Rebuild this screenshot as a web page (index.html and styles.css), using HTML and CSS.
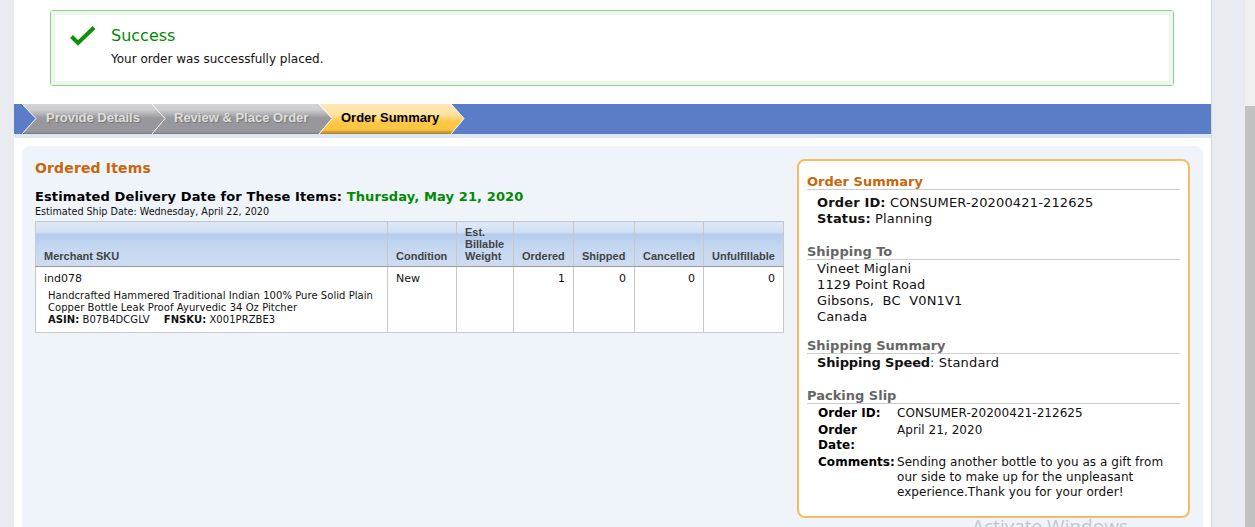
FILE: index.html
```html
<!DOCTYPE html>
<html lang="en">
<head>
  <meta charset="UTF-8">
  <title>Order Summary</title>
  <link rel="stylesheet" href="styles.css">
</head>
<body>
  <div class="gutter-left"></div>

  <div class="page">
    <div class="alert">
      <div class="alert-inner">
        <svg class="alert-icon" width="26" height="21" viewBox="0 0 26 21">
          <path d="M1.500 10.500l6.500 6.500L24 1.500" fill="none" stroke="#0a900a" stroke-width="4"/>
        </svg>
        <div>
          <div class="alert-title">Success</div>
          <div class="alert-text">Your order was successfully placed.</div>
        </div>
      </div>
    </div>

    <div class="steps">
      <svg class="step-defs" width="0" height="0">
        <defs>
          <linearGradient id="greyFill" x1="0" y1="0" x2="0" y2="1">
            <stop offset="0" stop-color="#d6d6d8"/>
            <stop offset=".2" stop-color="#cccccf"/>
            <stop offset=".47" stop-color="#98989c"/>
            <stop offset=".93" stop-color="#98989c"/>
            <stop offset="1" stop-color="#77777a"/>
          </linearGradient>
          <linearGradient id="goldFill" x1="0" y1="0" x2="0" y2="1">
            <stop offset="0" stop-color="#ffe9b8"/>
            <stop offset=".35" stop-color="#ffe2a0"/>
            <stop offset=".6" stop-color="#ffc745"/>
            <stop offset=".85" stop-color="#fcc440"/>
            <stop offset="1" stop-color="#a9812f"/>
          </linearGradient>
        </defs>
      </svg>

      <div class="step step-one">
        <svg width="144" height="30" viewBox="0 0 144 30">
          <path d="M0 0H130L143 14.500L130 30H0L14 14.500Z" fill="url(#greyFill)"/>
          <path d="M130 0L143 14.500L130 30M0 0L14 14.500L0 30" fill="none" stroke="#fff"/>
        </svg>
        <span class="step-label">Provide Details</span>
      </div>
      <div class="step step-two">
        <svg width="181" height="30" viewBox="0 0 181 30">
          <path d="M0 0H167L180 14.500L167 30H0L13 14.500Z" fill="url(#greyFill)"/>
          <path d="M167 0L180 14.500L167 30" fill="none" stroke="#fff"/>
        </svg>
        <span class="step-label">Review &amp; Place Order</span>
      </div>
      <div class="step step-three">
        <svg width="146" height="30" viewBox="0 0 146 30">
          <path d="M0 0H132L145 14.500L132 30H0L13 14.500Z" fill="url(#goldFill)"/>
          <path d="M132 0L145 14.500L132 30M0 0L13 14.500L0 30" fill="none" stroke="#fff"/>
        </svg>
        <span class="step-label">Order Summary</span>
      </div>
    </div>

    <div class="panel">
      <div class="items">
        <h2 class="items-title">Ordered Items</h2>
        <div class="delivery">Estimated Delivery Date for These Items: <span class="delivery-date">Thursday, May 21, 2020</span></div>
        <div class="ship-date">Estimated Ship Date: Wednesday, April 22, 2020</div>

        <table class="items-table">
          <thead>
            <tr>
              <th class="col-sku">Merchant SKU</th>
              <th class="col-cond">Condition</th>
              <th class="col-weight">Est. Billable Weight</th>
              <th class="col-ordered">Ordered</th>
              <th class="col-shipped">Shipped</th>
              <th class="col-cancelled">Cancelled</th>
              <th class="col-unf">Unfulfillable</th>
            </tr>
          </thead>
          <tbody>
            <tr>
              <td>
                ind078
                <div class="product">
                  Handcrafted Hammered Traditional Indian 100% Pure Solid Plain Copper Bottle Leak Proof Ayurvedic 34 Oz Pitcher<br>
                  <b>ASIN:</b> B07B4DCGLV <b class="fnsku">FNSKU:</b> X001PRZBE3
                </div>
              </td>
              <td>New</td>
              <td></td>
              <td class="num">1</td>
              <td class="num">0</td>
              <td class="num">0</td>
              <td class="num">0</td>
            </tr>
          </tbody>
        </table>
      </div>

      <div class="summary">
        <h3 class="summary-head first">Order Summary</h3>
        <div class="summary-body spaced">
          <div><b>Order ID:</b> CONSUMER-20200421-212625</div>
          <div><b>Status:</b> Planning</div>
        </div>

        <h3 class="summary-head">Shipping To</h3>
        <div class="summary-body">
          <div>Vineet Miglani</div>
          <div>1129 Point Road</div>
          <div>Gibsons,&nbsp; BC&nbsp; V0N1V1</div>
          <div>Canada</div>
        </div>

        <h3 class="summary-head">Shipping Summary</h3>
        <div class="summary-body spaced">
          <div class="speed"><b>Shipping Speed</b>: Standard</div>
        </div>

        <h3 class="summary-head">Packing Slip</h3>
        <table class="slip">
          <tr><th>Order ID:</th><td>CONSUMER-20200421-212625</td></tr>
          <tr><th>Order Date:</th><td>April 21, 2020</td></tr>
          <tr><th>Comments:</th><td>Sending another bottle to you as a gift from our side to make up for the unpleasant experience.Thank you for your order!</td></tr>
        </table>
      </div>
    </div>
  </div>

  <div class="gutter-right"></div>
  <div class="scrollbar"><div class="scroll-thumb"></div></div>

  <div class="watermark">Activate Windows</div>
</body>
</html>
```

FILE: styles.css
```css
html, body {
  height: 100%;
  margin: 0;
  overflow: hidden;
}
body {
  display: flex;
  position: relative;
  background: #e8ebef;
  font-family: "DejaVu Sans", Verdana, sans-serif;
  font-size: 12px;
  color: #111;
}
.gutter-left {
  width: 14px;
  flex: none;
}
.page {
  width: 1197px;
  flex: none;
  height: 527px;
  overflow: hidden;
  background: #fff;
  border-right: 1px solid #d4d4d4;
}
.gutter-right {
  flex: 1;
}
.scrollbar {
  width: 10px;
  flex: none;
  background: #f0f0f0;
  padding-top: 106px;
  box-sizing: border-box;
}
.scroll-thumb {
  height: 421px;
  background: #c1c1c1;
}

/* success box */
.alert {
  margin: 10px 0 18px 36px;
  width: 1124px;
  height: 76px;
  box-sizing: border-box;
  border: 1px solid #8ad08a;
  border-radius: 3px;
  background: #fff;
}
.alert-inner {
  display: flex;
  height: 100%;
  box-sizing: border-box;
  border: 4px solid #eaf7ea;
  padding: 11px 0 0 15px;
  gap: 15px;
}
.alert-title {
  font-size: 16px;
  line-height: 20px;
  color: #008a00;
}
.alert-text {
  font-size: 12px;
  line-height: 16px;
  margin-top: 5px;
}

/* steps */
.steps {
  display: flex;
  height: 30px;
  background: #5b7cc6;
  border-bottom: 4px solid #dce6f5;
  padding-left: 8px;
}
.step-defs {
  position: absolute;
}
.step {
  display: grid;
  height: 30px;
}
.step svg,
.step-label {
  grid-area: 1 / 1;
}
.step svg {
  display: block;
}
.step-label {
  font: bold 13px/28px "Liberation Sans", Arial, sans-serif;
  color: #dedede;
  text-shadow: 1px 1px 1px #777;
  white-space: nowrap;
}
.step-one {
  width: 144px;
  z-index: 3;
}
.step-one .step-label {
  padding-left: 24px;
}
.step-two {
  width: 181px;
  margin-left: -14px;
  z-index: 2;
}
.step-two .step-label {
  padding-left: 22px;
}
.step-three {
  width: 146px;
  margin-left: -14px;
  z-index: 1;
}
.step-three .step-label {
  padding-left: 22px;
  color: #000;
  text-shadow: none;
}

/* main panel */
.panel {
  display: flex;
  margin: 8px 8px 0;
  padding: 13px 13px 0;
  height: 400px;
  background: #eff4fb;
  border-radius: 8px 8px 0 0;
}
.items {
  width: 749px;
  flex: none;
}
.items-title {
  margin: 0;
  font-size: 14px;
  line-height: 18px;
  letter-spacing: .15px;
  color: #c8660a;
}
.delivery {
  margin-top: 12px;
  font-size: 13px;
  line-height: 16px;
  font-weight: bold;
  letter-spacing: .11px;
  color: #000;
}
.delivery-date {
  color: #008a00;
}
.ship-date {
  font-size: 9.600px;
  line-height: 13px;
}
.items-table {
  margin-top: 3px;
  width: 749px;
  table-layout: fixed;
  border-collapse: collapse;
  background: #fff;
}
.items-table th,
.items-table td {
  border: 1px solid #c8c8c8;
  vertical-align: top;
}
.items-table th {
  height: 40px;
  padding: 0 0 4px 8px;
  vertical-align: bottom;
  text-align: left;
  font: bold 11px/12px "Liberation Sans", Arial, sans-serif;
  color: #444;
  background: linear-gradient(#e0eaf7 0, #cfdff3 10px, #b2caec 12px, #c4d7f0 24px, #ccdcf2 100%);
  border-bottom: 1px solid #999;
}
.items-table td {
  height: 66px;
  box-sizing: border-box;
  padding: 5px 8px;
  font-size: 11px;
  line-height: 13px;
}
.items-table td.num {
  text-align: right;
  padding-right: 8px;
}
.col-sku { width: 343px; }
.col-cond { width: 60px; }
.col-weight { width: 48px; }
.col-ordered { width: 51px; }
.col-shipped { width: 52px; }
.col-cancelled { width: 60px; }
.product {
  margin: 5px 0 0 4px;
  font-size: 10px;
  line-height: 12px;
  letter-spacing: .05px;
  color: #111;
}
.fnsku {
  margin-left: 11px;
}

/* summary box */
.summary {
  width: 393px;
  height: 359px;
  flex: none;
  box-sizing: border-box;
  margin-left: 13px;
  padding: 13px 8px 0;
  background: #fff;
  border: 2px solid #f7bc62;
  border-radius: 8px;
}
.summary-head {
  margin: 13px 0 0;
  font-size: 13px;
  line-height: 15px;
  color: #666;
  border-bottom: 1px solid #ccc;
}
.summary-head.first {
  margin-top: 0;
  color: #c8660a;
}
.summary-body {
  padding: 1px 0 0 10px;
  font-size: 13px;
  line-height: 16px;
  letter-spacing: .15px;
}
.summary-body.spaced {
  padding-bottom: 4px;
}
.summary-head.first + .summary-body {
  padding-top: 5px;
}
.speed b {
  letter-spacing: -.13px;
}
.slip {
  margin: 1px 0 0 11px;
  border-collapse: collapse;
  font-size: 12px;
  line-height: 15px;
  letter-spacing: .05px;
}
.slip th {
  width: 79px;
  padding: 1px 0;
  text-align: left;
  vertical-align: top;
  color: #000;
}
.slip td {
  padding: 1px 0;
  vertical-align: top;
}

.watermark {
  position: absolute;
  left: 972px;
  top: 513px;
  font: 19px/27px "Open Sans", sans-serif;
  color: #c4c7cb;
  white-space: nowrap;
}
```
